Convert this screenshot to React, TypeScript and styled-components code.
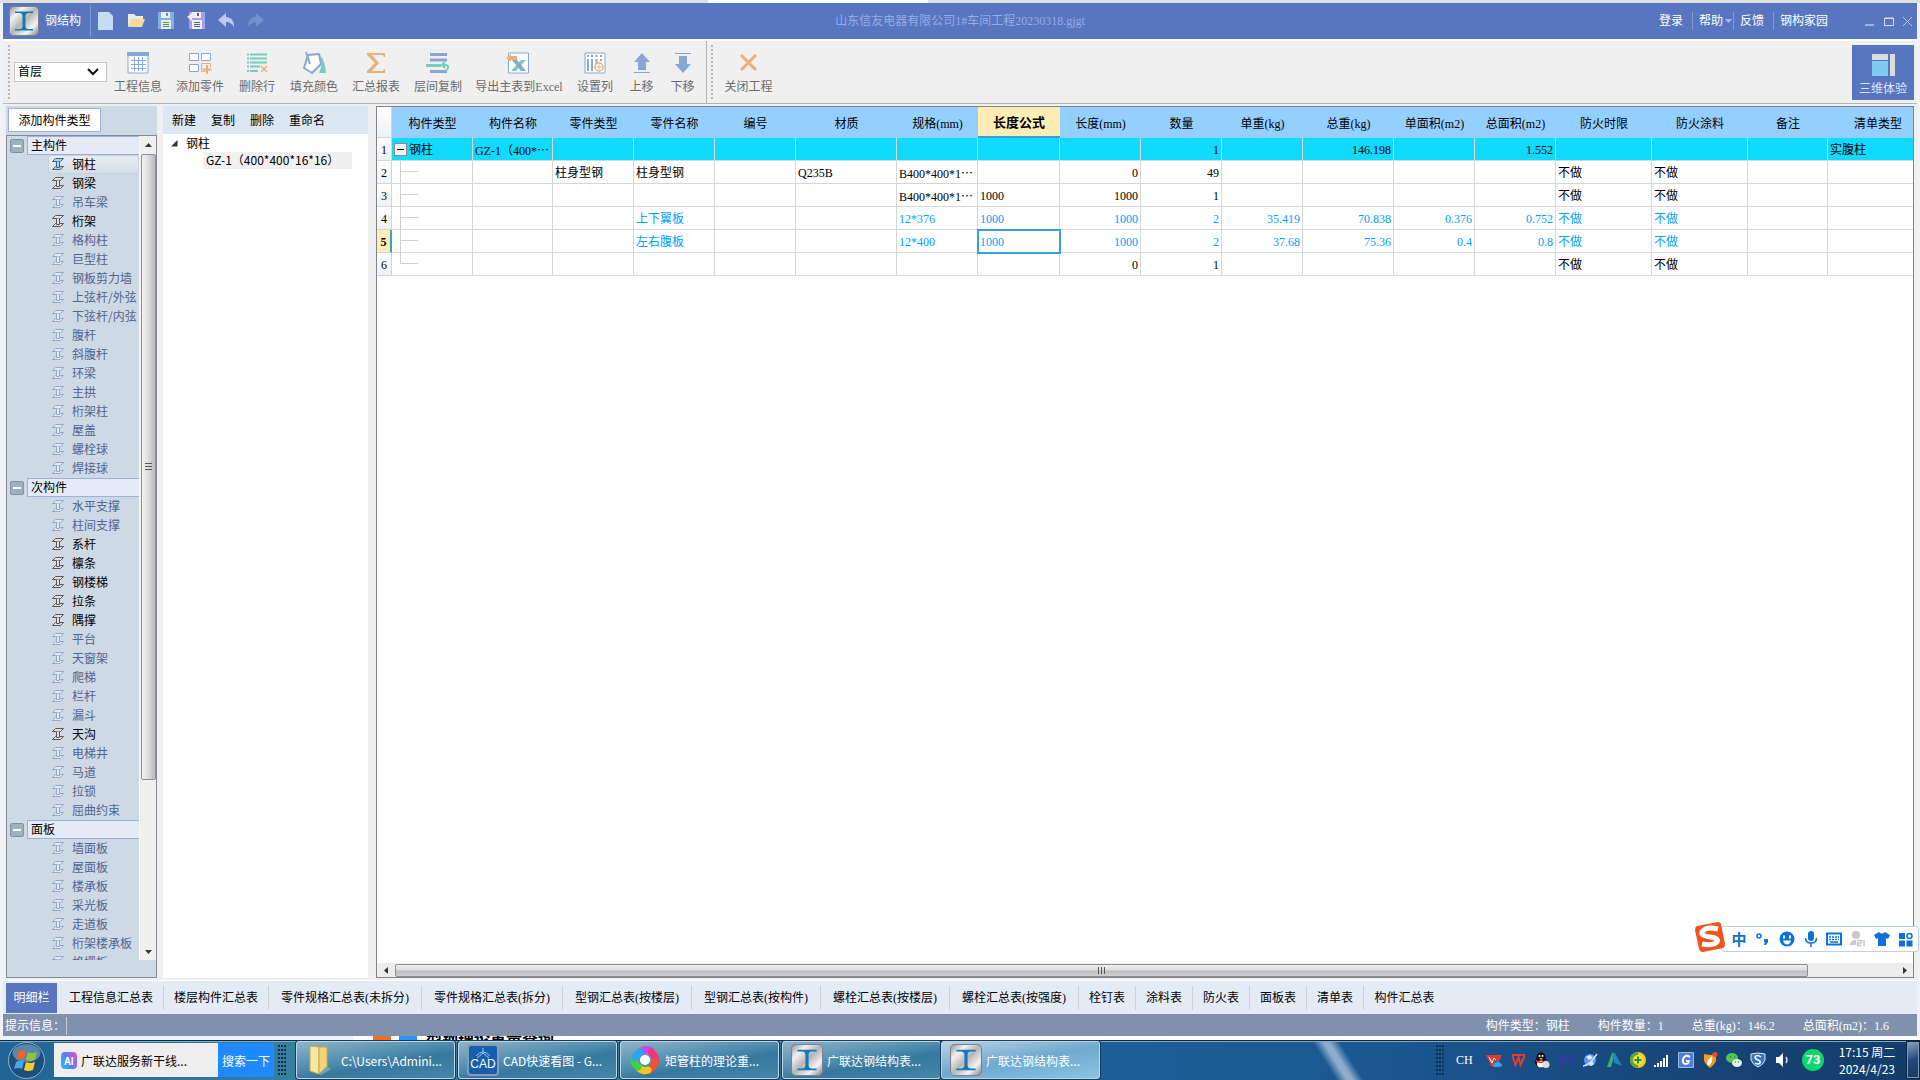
import React from "react";
import styled, { createGlobalStyle, css } from "styled-components";

const song = `"Liberation Serif", "Noto Sans CJK SC", serif`;
const hei = `"Noto Sans CJK SC", sans-serif`;

const GlobalStyle = createGlobalStyle`
  * { box-sizing: border-box; }
  body { margin: 0; background: #f0f0f0; }
  button, input, select { font: inherit; color: inherit; margin: 0; padding: 0; border: 0; background: none; border-radius: 0; }
  svg { display: block; flex: none; }
`;

/* ---------- frame ---------- */
const Screen = styled.div`
  height: 100vh;
  display: flex;
  flex-direction: column;
  overflow: hidden;
  font: 12px/18px ${song};
  color: #000;
  background: #eef3fa;
`;
const BackStrip = styled.div`
  height: 3px;
  flex: none;
  background: linear-gradient(90deg, #e0e0e0 708px, #fff 708px, #fff 928px, #e0e0e0 928px);
`;
const AppWindow = styled.div`
  flex: 1;
  min-height: 0;
  margin: 0 3px;
  display: flex;
  flex-direction: column;
  background: #f0f0f0;
`;

/* ---------- title bar ---------- */
const TitleBar = styled.header`
  height: 36px;
  flex: none;
  display: grid;
  grid-template-columns: 1fr auto 1fr;
  align-items: center;
  background: #5876c0;
  color: #fff;
`;
const TitleLeft = styled.div`
  display: flex;
  align-items: center;
  padding-left: 6px;
`;
const AppName = styled.span`
  margin: 0 9px 0 6px;
`;
const TitleRule = styled.i`
  width: 1px;
  height: ${(p: { $h: number }) => p.$h}px;
  background: #7f9bd2;
`;
const QuickTools = styled.div`
  display: flex;
  gap: 12px;
  margin-left: 6px;
`;
const QuickButton = styled.button`
  width: 18px;
  height: 20px;
  display: grid;
  place-items: center;
`;
const DocTitle = styled.span`
  color: #96ace6;
`;
const TitleRight = styled.div`
  display: flex;
  align-items: center;
  justify-content: flex-end;
  padding-right: 2px;
`;
const MenuButton = styled.button`
  display: flex;
  align-items: center;
  gap: 2px;
  padding: 0 ${(p: { $tight?: boolean }) => (p.$tight ? 1 : 9)}px 0 6px;
  height: 24px;
`;
const WindowButtons = styled.div`
  display: flex;
  gap: 4px;
  margin-left: 25px;
`;
const WindowButton = styled.button`
  width: 15px;
  height: 16px;
  display: grid;
  place-items: center;
`;

/* ---------- tool bar ---------- */
const ToolBar = styled.div`
  height: 65px;
  flex: none;
  display: flex;
  align-items: stretch;
  padding: 0 3px 0 5px;
  border-top: 2px solid #fff;
  border-bottom: 1px solid #b4b4b4;
  color: #6b6b6b;
`;
const Grip = styled.i`
  width: 2px;
  margin: 4px 0;
  background: repeating-linear-gradient(#b8b8b8 0 2px, transparent 2px 4px);
`;
const FloorBox = styled.label`
  align-self: center;
  position: relative;
  margin: 0 0 0 4px;
  svg { position: absolute; right: 8px; top: 6px; pointer-events: none; }
`;
const FloorSelect = styled.select`
  appearance: none;
  width: 93px;
  height: 20px;
  padding-left: 3px;
  border: 1px solid #c3c3c3;
  background: #fff;
  color: #000;
  display: block;
`;
const ToolButton = styled.button`
  width: ${(p: { $w: number }) => p.$w}px;
  padding: 11px 0 0;
  display: flex;
  flex-direction: column;
  align-items: center;
  gap: 4px;
  white-space: nowrap;
`;
const ToolRule = styled.i`
  width: 1px;
  margin: 0 4px 0 3px;
  background: #b4b4b4;
`;
const ThreeDButton = styled.button`
  margin: 4px 0 3px auto;
  width: 62px;
  padding-top: 7px;
  display: flex;
  flex-direction: column;
  align-items: center;
  gap: 3px;
  background: #5876c0;
  color: #dfe6f5;
`;

/* ---------- body ---------- */
const Body = styled.main`
  flex: 1;
  min-height: 0;
  display: flex;
  padding: 2px 3px;
`;
const TypePanel = styled.aside`
  width: 151px;
  display: flex;
  flex-direction: column;
  background: #cdd9e5;
  font-family: ${hei};
`;
const AddTypeButton = styled.button`
  width: 93px;
  height: 24px;
  flex: none;
  margin: 2px 0 3px 2px;
  border: 1px solid #9fb2dc;
  background: #fff;
  line-height: 22px;
`;
const TreeBox = styled.div`
  flex: 1;
  min-height: 0;
  display: flex;
  border: 1px solid #838a94;
  padding-bottom: 17px;
`;
const TreeList = styled.div`
  flex: 1;
  overflow: hidden;
  white-space: nowrap;
`;
const GroupRow = styled.div`
  height: 19px;
  display: flex;
  align-items: center;
  gap: 3px;
  padding-left: 3px;
`;
const GroupToggle = styled.button`
  width: 14px;
  height: 14px;
  border: 1px solid #7d95a3;
  border-radius: 2px;
  background: #9db1be;
  display: grid;
  place-items: center;
`;
const GroupName = styled.span`
  flex: 1;
  height: 19px;
  padding-left: 3px;
  line-height: 16px;
  border: 1px solid #9db0db;
  border-right: 0;
  background: #e4ebf6;
`;
type Tone = "on" | "off" | "sel";
const TypeItem = styled.button`
  width: calc(100% - 41px);
  height: 19px;
  margin-left: 41px;
  padding: 0 0 2px 4px;
  display: flex;
  align-items: center;
  gap: 8px;
  overflow: hidden;
  line-height: 17px;
  color: ${(p: { $tone: Tone }) => (p.$tone === "off" ? "#53648f" : "#000")};
  ${(p) =>
    p.$tone === "sel" &&
    css`
      background: linear-gradient(#e8edf3, #d6dce6);
      box-shadow: inset 0 0 0 1px #c8d0da;
      border-radius: 3px;
    `}
`;
const VScroll = styled.div`
  width: 17px;
  display: flex;
  flex-direction: column;
  align-items: center;
  background: #f0f0f0;
  border-left: 1px solid #f8f8f8;
`;
const VThumb = styled.div`
  width: 15px;
  flex: 0 0 76%;
  border: 1px solid #8d8f93;
  border-radius: 2px;
  background: linear-gradient(90deg, #f3f3f3, #dedee0 45%, #b9babd);
  display: grid;
  place-items: center;
`;
const ScrollButton = styled.button`
  width: 16px;
  height: 18px;
  display: grid;
  place-items: center;
`;
const Spacer = styled.i`
  flex: 1;
`;

const MemberPanel = styled.section`
  width: 205px;
  margin: 0 8px 0 6px;
  background: #fff;
  font-family: ${hei};
`;
const MemberTools = styled.div`
  height: 28px;
  display: flex;
  gap: 15px;
  padding-left: 9px;
  background: #dbe7f3;
`;
const PlainButton = styled.button`
  line-height: 28px;
`;
const MemberRoot = styled.div`
  display: flex;
  align-items: center;
  gap: 8px;
  height: 18px;
  padding-left: 8px;
`;
const MemberLeaf = styled.div`
  height: 17px;
  line-height: 16px;
  margin: 0 16px 0 40px;
  padding-left: 3px;
  background: #f0f0f0;
  white-space: nowrap;
`;

/* ---------- grid ---------- */
const GridPanel = styled.section`
  flex: 1;
  min-width: 0;
  display: flex;
  flex-direction: column;
  border: 1px solid #7f858f;
  background: #fff;
`;
const GridArea = styled.div`
  flex: 1;
  min-height: 0;
  overflow: hidden;
`;
const Table = styled.table`
  width: 1551px;
  table-layout: fixed;
  border-collapse: separate;
  border-spacing: 0;
`;
const HeadCell = styled.th`
  height: 31px;
  padding: 2px 0 0;
  font-size: ${(p: { $active?: boolean }) => (p.$active ? 13 : 12)}px;
  font-weight: ${(p) => (p.$active ? 700 : 400)};
  background: ${(p) => (p.$active ? "#ffedb5" : "#94d0ff")};
  border-bottom: ${(p) => (p.$active ? "2px solid #35a1d4" : "0")};
`;
const RowHead = styled.th`
  height: 23px;
  padding: 2px 0 0;
  line-height: 16px;
  color: #000;
  font-weight: ${(p: { $active?: boolean }) => (p.$active ? 700 : 400)};
  background: ${(p) => (p.$active ? "#ffedb5" : "linear-gradient(#fff, #eff1f4)")};
  border-bottom: 1px solid #d4d4d4;
  border-right: ${(p) => (p.$active ? "2px solid #35a1d4" : "1px solid #d4d4d4")};
`;
const Cell = styled.td`
  height: 23px;
  padding: ${(p: { $tree?: boolean }) => (p.$tree ? "0" : "2px 2px 0")};
  line-height: 16px;
  white-space: nowrap;
  overflow: hidden;
  border-right: 1px solid #d6d6d6;
  border-bottom: 1px solid #d6d6d6;
  text-align: ${(p: { $num?: boolean }) => (p.$num ? "right" : "left")};
  ${(p: { $active?: boolean }) => p.$active && "outline: 2px solid #35a1d4; outline-offset: -1px;"}
`;
const BodyRow = styled.tr`
  color: ${(p: { $blue?: boolean }) => (p.$blue ? "#00a2f8" : "#000")};
  background: ${(p: { $fill?: boolean }) => (p.$fill ? "#10dafe" : "#fff")};
`;
const Dots = styled.span`
  font-family: "Noto Sans CJK SC", sans-serif;
`;
const RootCell = styled.div`
  display: flex;
  align-items: center;
  gap: 2px;
  padding: 1px 0 0 2px;
`;
const CellToggle = styled.button`
  width: 13px;
  height: 13px;
  border: 1px solid #8d8d8d;
  background: #f2f2f4;
  display: grid;
  place-items: center;
`;
const HScroll = styled.div`
  height: 14px;
  flex: none;
  display: flex;
  align-items: center;
  background: #ededed;
`;
const HThumb = styled.div`
  flex: 0 0 92%;
  height: 13px;
  border: 1px solid #8d8f93;
  border-radius: 2px;
  background: linear-gradient(#f0f0f0, #dcdcde 45%, #bfc0c3 55%, #cfcfd1);
  display: grid;
  place-items: center;
`;
const HButton = styled.button`
  width: 18px;
  height: 14px;
  display: grid;
  place-items: center;
`;

/* ---------- bottom tabs and status ---------- */
const SheetTabs = styled.nav`
  height: 34px;
  flex: none;
  display: flex;
  align-items: center;
  padding-left: 3px;
  border-top: 1px solid #fff;
  background: #e4ebf5;
`;
const SheetTab = styled.button`
  width: ${(p: { $w: number }) => p.$w}px;
  height: 24px;
  white-space: nowrap;
  border-right: 1px solid #cfd0d2;
  &:last-child { border-right: 0; }
`;
const ActiveTab = styled.button`
  width: 51px;
  height: 30px;
  margin-right: 2px;
  background: #5876c0;
  color: #fff;
`;
const StatusBar = styled.footer`
  height: 22px;
  flex: none;
  display: flex;
  align-items: center;
  padding: 1px 28px 0 2px;
  background: #8091ad;
  color: #fff;
`;
const StatusRule = styled.i`
  width: 1px;
  height: 18px;
  margin-left: 1px;
  background: #c5ccd8;
`;
const StatusItems = styled.div`
  margin-left: auto;
  display: flex;
  gap: 28px;
`;

/* ---------- desktop behind and taskbar ---------- */
const Peek = styled.div`
  height: 4px;
  flex: none;
  display: flex;
  gap: 8px;
  padding-left: 373px;
  overflow: hidden;
  background: linear-gradient(90deg, #edf3fb 353px, #fff 353px);
`;
const PeekChip = styled.i`
  width: 18px;
  background: ${(p: { $c: string }) => p.$c};
`;
const PeekText = styled.span`
  padding-left: 1px;
  font: 700 16px/4px ${hei};
  white-space: nowrap;
`;
const TaskBar = styled.div`
  height: 40px;
  flex: none;
  display: flex;
  align-items: center;
  padding: 0 0 1px 8px;
  border-top: 1px solid #0d2940;
  box-shadow: inset 0 1px 0 #7fa9c4;
  font-family: ${hei};
  line-height: 17px;
  color: #fff;
  background:
    linear-gradient(58deg, transparent 40%, #8fadcb 48%, #8fadcb 52%, transparent 60%) 1283px 0 / 110px 40px no-repeat,
    linear-gradient(90deg, #1f6494, #35809f 15%, #2c759f 40%, #1c5f98 58%, #1b5790 72%, #174578 88%, #133c69);
`;
const Orb = styled.button`
  width: 37px;
  height: 37px;
`;
const SearchBox = styled.form`
  display: flex;
  height: 34px;
  margin-left: 9px;
`;
const SearchField = styled.label`
  width: 164px;
  display: flex;
  align-items: center;
  gap: 4px;
  padding-left: 7px;
  background: #eee;
`;
const AiMark = styled.i`
  width: 16px;
  height: 17px;
  border-radius: 4px;
  font: 700 10px/17px ${hei};
  text-align: center;
  background: linear-gradient(60deg, #19c8f5, #5b7cf8 50%, #f34fc0);
`;
const SearchInput = styled.input`
  width: 130px;
  color: #000;
  outline: 0;
`;
const SearchButton = styled.button`
  width: 56px;
  background: #1f8aff;
`;
const TaskGrip = styled.i`
  width: 8px;
  height: 30px;
  margin: ${(p: { $m: string }) => p.$m};
  background: radial-gradient(circle at 1px 1px, #0c2f4a 1px, transparent 1px) 0 0 / 3px 4px;
`;
const TaskList = styled.div`
  display: flex;
  gap: 3px;
`;
const TaskGroup = styled.div`
  display: flex;
`;
const TaskButton = styled.button`
  width: 159px;
  height: 38px;
  padding-left: 8px;
  display: flex;
  align-items: center;
  gap: 4px;
  text-align: left;
  white-space: nowrap;
  border: 1px solid #c1d6e2;
  border-radius: 3px;
  box-shadow: 0 0 0 1px #123c59;
  background: ${(p: { $active?: boolean }) =>
    p.$active
      ? "linear-gradient(170deg, #b9d2e3, #6fa9cf 50%, #8cc3e3)"
      : "linear-gradient(170deg, #8fb5c8, #4d8bae 45%, #37789f 60%, #4487a9)"};
`;
const Tray = styled.div`
  margin-left: auto;
  display: flex;
  align-items: center;
`;
const Lang = styled.span`
  width: 24px;
  margin-right: 2px;
  font-family: ${song};
`;
const TrayIcon = styled.button`
  width: 24px;
  height: 24px;
  display: grid;
  place-items: center;
`;
const Score = styled.span`
  width: 22px;
  height: 22px;
  margin: 0 13px 0 8px;
  border-radius: 50%;
  background: #0bd76b;
  font: 700 13px/22px Roboto, sans-serif;
  text-align: center;
`;
const Clock = styled.time`
  width: 60px;
  text-align: center;
  white-space: nowrap;
`;
const ShowDesktop = styled.button`
  width: 14px;
  height: 38px;
  margin-left: 9px;
  border: 1px solid #0b2744;
  box-shadow: inset 0 0 0 1px #7c97b3;
  background: linear-gradient(160deg, #8ba5be, #23497a 50%, #173a62);
`;

/* ---------- floating input method bar ---------- */
const ImeBar = styled.div`
  position: fixed;
  right: 1px;
  bottom: 128px;
  width: 198px;
  height: 26px;
  padding: 0 0 0 5px;
  display: flex;
  align-items: center;
  background: #fff;
  border: 1px solid #bcd2ea;
  border-radius: 3px;
  color: #0c72d8;
`;
const ImeLogo = styled.span`
  position: absolute;
  left: -29px;
  top: -6px;
`;
const ImeButton = styled.button`
  flex: 1;
  height: 24px;
  display: grid;
  place-items: center;
  font: 700 15px/20px ${hei};
`;

/* ---------- drawings ---------- */
const BeamLogo = ({ size, id }: { size: number; id: string }) => (
  <svg width={size} height={size} viewBox="0 0 30 30">
    <defs>
      <linearGradient id={id} x1="0" y1="0" x2="1" y2="1">
        <stop offset="0" stopColor="#8f8f8f" />
        <stop offset=".25" stopColor="#f2f2f2" />
        <stop offset=".5" stopColor="#b5b5b5" />
        <stop offset=".75" stopColor="#f4f4f4" />
        <stop offset="1" stopColor="#7d7d7d" />
      </linearGradient>
    </defs>
    <rect x=".5" y=".5" width="29" height="29" rx="4" fill={`url(#${id})`} stroke="#7d8088" />
    <path d="M6 5.500H24V7H19Q16.500 7.500 16.500 9.500V20.500Q16.500 22.500 19 23H24V24.500H6V23H11Q13.500 22.500 13.500 20.500V9.500Q13.500 7.500 11 7H6Z" fill="#1479b8" />
  </svg>
);

const beamTone = {
  on: { s: "#5b5654", f: "#e6dfdb" },
  off: { s: "#97a5c9", f: "#dcebf8" },
  sel: { s: "#43627f", f: "#a5d4ee" },
};
const BeamIcon = ({ tone }: { tone: Tone }) => (
  <svg width="12" height="12" viewBox="0 0 12 12" fill={beamTone[tone].f} stroke={beamTone[tone].s}>
    <path d="M3.500.5H11.500L8.500 3.500H.5ZM3.500 8.500H11.500L8.500 11.500H.5Z" />
    <path d="M4.500 3.500V9.500H7.500V3.500" />
  </svg>
);

const Arrow = ({ d }: { d: string }) => (
  <svg width="7" height="7" viewBox="0 0 7 7" fill="#333">
    <path d={d} />
  </svg>
);

const B = "#87a8d6";
const G = "#75cdbb";
const O = "#eab077";
const toolIcons: Record<string, React.ReactNode> = {
  info: (
    <>
      <path d="M1 1h20v20H1z" fill="#fff" stroke={B} />
      <path d="M0 0h22v4H0z" fill={B} />
      <path d="M4 8.500h15M4 12.500h15M4 16.500h15M7.500 5v14M11.500 5v14M15.500 5v14" stroke={B} fill="none" />
    </>
  ),
  add: (
    <>
      <path d="M.5 1.500h9v7h-9zM12.500 1.500h9v7h-9zM.5 12.500h9v7h-9z" fill="#fff" stroke={B} />
      <path d="M21.500 15v-3.500h-9v8h4" fill="none" stroke={O} />
      <path d="M18 13v9M13.500 17.500h9" stroke={O} strokeWidth="2" fill="none" />
    </>
  ),
  del: (
    <>
      <path d="M1 2.500h2M1 6.500h2M1 10.500h2M1 14.500h2M1 19h2M4 2.500h17M4 6.500h17M4 10.500h17M4 14.500h10M4 19h8" stroke={G} strokeWidth="2" />
      <path d="M15 14l6 6M21 14l-6 6" stroke={O} strokeWidth="1.500" />
    </>
  ),
  fill: (
    <>
      <path d="M5 3l11-1 2 10-9 9L1 16z" fill="#fff" stroke={B} strokeWidth="2" strokeLinejoin="round" />
      <path d="M3 0l4 12" stroke={B} strokeWidth="2" />
      <path d="M17 3q5 5 6 18h-7q4-8 1-18z" fill={G} />
    </>
  ),
  sum: <path d="M2 1h18v4h-1l-1-2H7l7 8-7 8h11l1-2h1v4H2v-2l8-8-8-8z" fill={O} />,
  copy: (
    <>
      <path d="M3 1h17v3H3zM3 6.500h17v3H3zM3 18h17v3H3z" fill={B} />
      <path d="M-1 12h15v3H-1z" fill={G} />
      <path d="M16 13h3q3 1 2 3l-2 3M18 10l-3 3 3 3" fill="none" stroke={G} strokeWidth="2" />
    </>
  ),
  excel: (
    <>
      <path d="M.5 1h20v20h-20z" fill="#fff" stroke={B} />
      <path d="M3 19h5L18 8h-5z" fill={G} />
      <path d="M4 8h5l9 11h-5z" fill={B} />
      <path d="M-2 6l5-4v2h6v4H3v2z" fill={O} />
    </>
  ),
  cols: (
    <>
      <path d="M1 1h20v20H1z" fill="#fff" stroke={B} />
      <path d="M4 3v2M8 3v2M12.500 3v2M17 3v2M4 7v12M8 7v12M12.500 7v5M17 7v2" stroke={B} strokeWidth="2" />
      <circle cx="15" cy="15" r="4" fill="#fff" stroke={O} strokeWidth="1.500" />
      <path d="M15 12.500v5M12.500 15h5M15 9.500v1M15 19.500v1M9.500 15h1M19.500 15h1" stroke={O} />
    </>
  ),
  up: <path d="M11 1l8 9h-4v8H7v-8H3zM3 20h16v1H3z" fill={B} />,
  down: <path d="M11 21l8-9h-4V4H7v8H3zM3 1h16v1H3z" fill={B} />,
  close: <path d="M3 3l15 15M18 3L3 18" stroke={O} strokeWidth="3" />,
};
const ToolIcon = ({ name }: { name: string }) => (
  <svg width="22" height="22" viewBox="0 0 22 22" fill="none" overflow="visible">
    {toolIcons[name]}
  </svg>
);

const quickIcons: [string, React.ReactNode][] = [
  ["新建文件", <path d="M1 1h11l4 4v14H1z" fill="#c5dcf3" key="a" />],
  [
    "打开",
    <g key="b">
      <path d="M1 15V3h6l2 2h7v6z" fill="#e6efdf" />
      <path d="M1 16l3-8h14l-3 8z" fill="#f4d9a0" />
    </g>,
  ],
  [
    "保存",
    <g key="c">
      <path d="M1 1h16v17H1z" fill="#7fb2e2" />
      <path d="M4 1h9v6H4zM4 9h10v9H4z" fill="#e6efdf" />
      <path d="M9 2h2v3H9zM6 11h6v1H6zM6 13h6v1H6zM6 15h6v1H6z" fill="#5e8f8f" />
    </g>,
  ],
  [
    "另存为",
    <g key="d">
      <path d="M2 1h16v17H2z" fill="#a99fe8" />
      <path d="M5 1h9v6H5zM5 9h10v9H5z" fill="#f0efe6" />
      <path d="M10 2h2v3h-2zM7 11h6v1H7zM7 13h6v1H7zM7 15h6v1H7z" fill="#5d5a95" />
      <path d="M0 6l5-4v2h3v3H5v3z" fill="#e6efdf" />
    </g>,
  ],
  ["撤销", <path key="e" d="M1 9l8-7v4q8 0 8 10-3-5-8-5v5z" fill="#bccbec" />],
  ["重做", <path key="f" d="M17 9L9 2v4Q1 6 1 16q3-5 8-5v5z" fill="#7590cf" />],
];

/* ---------- data ---------- */
const tools: [string, string, number][] = [
  ["info", "工程信息", 62],
  ["add", "添加零件", 62],
  ["del", "删除行", 52],
  ["fill", "填充颜色", 62],
  ["sum", "汇总报表", 62],
  ["copy", "层间复制", 62],
  ["excel", "导出主表到Excel", 100],
  ["cols", "设置列", 52],
  ["up", "上移", 41],
  ["down", "下移", 41],
];

const groups: { name: string; items: string[] }[] = [
  {
    name: "主构件",
    items: ["*钢柱", "+钢梁", "吊车梁", "+桁架", "格构柱", "巨型柱", "钢板剪力墙", "上弦杆/外弦", "下弦杆/内弦", "腹杆", "斜腹杆", "环梁", "主拱", "桁架柱", "屋盖", "螺栓球", "焊接球"],
  },
  {
    name: "次构件",
    items: ["水平支撑", "柱间支撑", "+系杆", "+檩条", "+钢楼梯", "+拉条", "+隅撑", "平台", "天窗架", "爬梯", "栏杆", "漏斗", "+天沟", "电梯井", "马道", "拉锁", "屈曲约束"],
  },
  { name: "面板", items: ["墙面板", "屋面板", "楼承板", "采光板", "走道板", "桁架楼承板", "格栅板"] },
];

const columns: [string, number, boolean?][] = [
  ["构件类型", 81],
  ["构件名称", 80],
  ["零件类型", 81],
  ["零件名称", 81],
  ["编号", 81],
  ["材质", 101],
  ["规格(mm)", 81],
  ["长度公式", 82],
  ["长度(mm)", 81, true],
  ["数量", 81, true],
  ["单重(kg)", 81, true],
  ["总重(kg)", 91, true],
  ["单面积(m2)", 81, true],
  ["总面积(m2)", 81, true],
  ["防火时限", 96],
  ["防火涂料", 96],
  ["备注", 80],
  ["清单类型", 100],
];

const rows: string[][] = [
  ["钢柱", "GZ-1（400*…", "", "", "", "", "", "", "", "1", "", "146.198", "", "1.552", "", "", "", "实腹柱"],
  ["", "", "柱身型钢", "柱身型钢", "", "Q235B", "B400*400*1…", "", "0", "49", "", "", "", "", "不做", "不做", "", ""],
  ["", "", "", "", "", "", "B400*400*1…", "1000", "1000", "1", "", "", "", "", "不做", "不做", "", ""],
  ["", "", "", "上下翼板", "", "", "12*376", "1000", "1000", "2", "35.419", "70.838", "0.376", "0.752", "不做", "不做", "", ""],
  ["", "", "", "左右腹板", "", "", "12*400", "1000", "1000", "2", "37.68", "75.36", "0.4", "0.8", "不做", "不做", "", ""],
  ["", "", "", "", "", "", "", "", "0", "1", "", "", "", "", "不做", "不做", "", ""],
];

const sheets = [
  "工程信息汇总表",
  "楼层构件汇总表",
  "零件规格汇总表(未拆分)",
  "零件规格汇总表(拆分)",
  "型钢汇总表(按楼层)",
  "型钢汇总表(按构件)",
  "螺栓汇总表(按楼层)",
  "螺栓汇总表(按强度)",
  "栓钉表",
  "涂料表",
  "防火表",
  "面板表",
  "清单表",
  "构件汇总表",
];
/* a wide character takes 12px, a bracket 6px, and each tab adds 21px */
const sheetWidth = (name: string) =>
  [...name].reduce((sum, ch) => sum + (ch === "(" || ch === ")" ? 6 : 12), 21);

const CellText = ({ text }: { text: string }) =>
  text.endsWith("…") ? (
    <>
      {text.slice(0, -1)}
      <Dots>⋯</Dots>
    </>
  ) : (
    <>{text}</>
  );

/* ---------- tray drawings ---------- */
const trayIcons: [string, React.ReactNode][] = [
  [
    "WPS云",
    <g key="1">
      <path d="M0 3h16l-3 6H9L7 14H5z" fill="#e23a2e" />
      <path d="M3 5l3 6 2-5 2 2" stroke="#fff" fill="none" />
      <path d="M7 15q0-4 3-5 3-2 4 1 2 0 2 2t-2 2z" fill="#3f9bf0" />
    </g>,
  ],
  ["WPS", <path key="2" d="M2 3h13M2.500 4l3 9 3-8 2 8 4-9" stroke="#e33d31" strokeWidth="2" fill="none" />],
  [
    "QQ",
    <g key="3">
      <ellipse cx="7" cy="10" rx="6" ry="6" fill="#111" />
      <circle cx="7" cy="5" r="4.500" fill="#111" />
      <circle cx="5.500" cy="4" r="1" fill="#fff" />
      <circle cx="8.500" cy="4" r="1" fill="#fff" />
      <path d="M5 6h4l-2 2z" fill="#f5a21b" />
      <ellipse cx="7" cy="12" rx="4" ry="3.500" fill="#fff" />
      <path d="M2 8q5 3 10 0v2q-5 2-10 0z" fill="#e32b2b" />
      <circle cx="12" cy="12.500" r="3.500" fill="#ddd" />
    </g>,
  ],
  ["同步", <path key="4" d="M2 5h7M11 5q4 1 4 6h-3M9 12H4q-3-2-1-6" stroke="#3c35a5" strokeWidth="2" fill="none" />],
  [
    "浏览器",
    <g key="5">
      <circle cx="8" cy="8" r="6" fill="#5e9ce8" />
      <path d="M4 5l4-2 3 3-4 2zM6 11l4-2 2 3-3 2z" fill="#dcecfb" />
      <path d="M1 14q6 0 14-12" stroke="#cfe0f7" strokeWidth="1.500" fill="none" />
    </g>,
  ],
  [
    "Autodesk",
    <g key="6">
      <path d="M1 15L6 1h3L5 15z" fill="#3fae6a" />
      <path d="M7 1h2l7 13-8-3z" fill="#1f86c6" />
    </g>,
  ],
  [
    "安全卫士",
    <g key="7">
      <circle cx="8" cy="8" r="8" fill="#f0cc1e" />
      <path d="M0 8a8 8 0 0 1 8-8v16a8 8 0 0 1-8-8z" fill="#56a83a" />
      <circle cx="8" cy="8" r="5" fill="#f6e045" />
      <path d="M8 4.500v7M4.500 8h7" stroke="#2f8f2f" strokeWidth="2" />
    </g>,
  ],
  ["网络", <path key="8" d="M1 13v2M4 11v4M7 9v6M10 6v9M13 3v12" stroke="#fff" strokeWidth="2" />],
  [
    "广联达",
    <g key="9">
      <path d="M.5.5h15v15H.5z" fill="#4f7fd6" stroke="#9db9ea" />
      <path d="M12 5q-5-3-7 2-1 5 3 5 2 0 3-3H8" stroke="#fff" strokeWidth="2" fill="none" />
    </g>,
  ],
  [
    "防火墙",
    <g key="10">
      <path d="M2 2l6 1 6-1v7q-2 4-6 7-4-3-6-7z" fill="#f39b23" />
      <path d="M5 12q0-4 5-8 1 6-3 10z" fill="#fff" />
      <circle cx="13" cy="2.500" r="2.500" fill="#f0472e" />
    </g>,
  ],
  [
    "微信",
    <g key="11">
      <ellipse cx="6" cy="6" rx="6" ry="5" fill="#4fc553" />
      <ellipse cx="11" cy="11" rx="5" ry="4" fill="#e6efe4" />
      <path d="M4 5h1M8 5h1M9 10h1M12 10h1" stroke="#244" />
    </g>,
  ],
  [
    "盾牌",
    <g key="12">
      <path d="M1 2l7-1 7 1v6q-2 5-7 7-5-2-7-7z" fill="#2f77ba" stroke="#e1e9f2" />
      <path d="M11 5q-4-3-6 0 0 2 3 3 3 1 2 3-2 2-5 0" stroke="#fff" strokeWidth="1.500" fill="none" />
    </g>,
  ],
  [
    "音量",
    <g key="13">
      <path d="M2 5h3l4-4v14l-4-4H2z" fill="#fff" />
      <path d="M12 5q2 3 0 6" stroke="#cdd8e4" fill="none" strokeWidth="1.500" />
    </g>,
  ],
];

const imeIcons: [string, React.ReactNode][] = [
  [
    "标点",
    <g key="1">
      <circle cx="4" cy="5" r="2" fill="none" stroke="currentColor" strokeWidth="1.500" />
      <path d="M9 8h4v3l-2 3H9l1-3H9z" />
    </g>,
  ],
  [
    "表情",
    <g key="2">
      <circle cx="8" cy="8" r="7.500" />
      <path d="M5 4.500v3M11 4.500v3" stroke="#fff" strokeWidth="2" />
      <path d="M4 9.500h8q-1 4-4 4t-4-4z" fill="#fff" />
    </g>,
  ],
  [
    "语音",
    <g key="3">
      <rect x="5" y="0" width="6" height="10" rx="3" />
      <path d="M2.500 7q0 5 5.500 5t5.500-5M8 12v4" stroke="currentColor" fill="none" strokeWidth="1.500" />
    </g>,
  ],
  [
    "软键盘",
    <g key="4">
      <path d="M1 2.500h14v11H1z" fill="none" stroke="currentColor" strokeWidth="2" />
      <path d="M3 6h10M3 8.500h10" stroke="currentColor" strokeWidth="1.500" strokeDasharray="2 1" />
      <path d="M4 11h8" stroke="currentColor" strokeWidth="1.500" />
    </g>,
  ],
  [
    "账号",
    <g key="5" fill="#c9c9c9">
      <circle cx="6" cy="4" r="4" />
      <path d="M0 14q0-5 6-5v5z" />
      <path d="M7 9.500h4.500v2.500H7.500v2.500h4M14 9v6" stroke="#c9c9c9" strokeWidth="1.500" fill="none" />
    </g>,
  ],
  ["皮肤", <path key="6" d="M5 1q3 3 6 0l5 3-2 4-2-1v8H4V7L2 8 0 4z" />],
  [
    "工具箱",
    <g key="7">
      <path d="M1 2h6v6H1zM1 9.500h6v6H1zM8.500 9.500h6v6h-6z" />
      <circle cx="11.500" cy="5" r="2.500" fill="none" stroke="currentColor" strokeWidth="1.500" />
    </g>,
  ],
];

/* ---------- sections ---------- */
const TopBar = () => (
  <TitleBar>
    <TitleLeft>
      <BeamLogo size={30} id="logo-main" />
      <AppName>钢结构</AppName>
      <TitleRule $h={32} />
      <QuickTools>
        {quickIcons.map(([label, art]) => (
          <QuickButton key={label} aria-label={label}>
            <svg width="18" height="20" viewBox="0 0 18 20">
              {art}
            </svg>
          </QuickButton>
        ))}
      </QuickTools>
    </TitleLeft>
    <DocTitle>山东信友电器有限公司1#车间工程20230318.gjgt</DocTitle>
    <TitleRight>
      <MenuButton>登录</MenuButton>
      <TitleRule $h={18} />
      <MenuButton $tight>
        帮助
        <svg width="7" height="4" viewBox="0 0 7 4" fill="#a9bae4">
          <path d="M0 0h7L3.500 4z" />
        </svg>
      </MenuButton>
      <TitleRule $h={18} />
      <MenuButton>反馈</MenuButton>
      <TitleRule $h={18} />
      <MenuButton>钢构家园</MenuButton>
      <WindowButtons>
        <WindowButton aria-label="最小化">
          <svg width="9" height="9" stroke="#b9c7ea" strokeWidth="1.500">
            <path d="M0 8h9" />
          </svg>
        </WindowButton>
        <WindowButton aria-label="最大化">
          <svg width="10" height="9" stroke="#d5def2" fill="none">
            <path d="M.5 1h9v7.500h-9zM0 1.500h10" />
          </svg>
        </WindowButton>
        <WindowButton aria-label="关闭">
          <svg width="9" height="9" stroke="#b9c7ea">
            <path d="M0 0l9 9M9 0L0 9" />
          </svg>
        </WindowButton>
      </WindowButtons>
    </TitleRight>
  </TitleBar>
);

const Tools = () => (
  <ToolBar>
    <Grip />
    <FloorBox>
      <FloorSelect defaultValue="首层" aria-label="楼层">
        <option>首层</option>
      </FloorSelect>
      <svg width="12" height="8" viewBox="0 0 12 8" fill="none" stroke="#111" strokeWidth="2">
        <path d="M1 1l5 5 5-5" />
      </svg>
    </FloorBox>
    {tools.map(([icon, label, w]) => (
      <ToolButton key={icon} $w={w}>
        <ToolIcon name={icon} />
        {label}
      </ToolButton>
    ))}
    <ToolRule />
    <Grip />
    <ToolButton $w={71}>
      <ToolIcon name="close" />
      关闭工程
    </ToolButton>
    <ThreeDButton>
      <svg width="23" height="25" viewBox="0 0 23 25">
        <path d="M0 2h16v6H0zM18 2h5v22h-5z" fill="#dcdcdc" />
        <path d="M0 9h16v15H0z" fill="#7ecbf3" />
      </svg>
      三维体验
    </ThreeDButton>
  </ToolBar>
);

const TypeTree = () => (
  <TypePanel>
    <AddTypeButton>添加构件类型</AddTypeButton>
    <TreeBox>
      <TreeList>
        {groups.map((g) => (
          <React.Fragment key={g.name}>
            <GroupRow>
              <GroupToggle aria-label={`收起${g.name}`}>
                <svg width="8" height="2">
                  <path d="M0 0h8v2H0z" fill="#fff" />
                </svg>
              </GroupToggle>
              <GroupName>{g.name}</GroupName>
            </GroupRow>
            {g.items.map((raw) => {
              const tone: Tone = raw[0] === "*" ? "sel" : raw[0] === "+" ? "on" : "off";
              return (
                <TypeItem key={raw} $tone={tone}>
                  <BeamIcon tone={tone} />
                  {raw.replace(/^[*+]/, "")}
                </TypeItem>
              );
            })}
          </React.Fragment>
        ))}
      </TreeList>
      <VScroll>
        <ScrollButton aria-label="向上滚动">
          <Arrow d="M0 5l3.500-4L7 5z" />
        </ScrollButton>
        <VThumb>
          <svg width="7" height="8" stroke="#555">
            <path d="M0 .5h7M0 3.500h7M0 6.500h7" />
          </svg>
        </VThumb>
        <Spacer />
        <ScrollButton aria-label="向下滚动">
          <Arrow d="M0 2l3.500 4L7 2z" />
        </ScrollButton>
      </VScroll>
    </TreeBox>
  </TypePanel>
);

const Members = () => (
  <MemberPanel>
    <MemberTools>
      {["新建", "复制", "删除", "重命名"].map((t) => (
        <PlainButton key={t}>{t}</PlainButton>
      ))}
    </MemberTools>
    <MemberRoot>
      <svg width="7" height="7" viewBox="0 0 7 7" fill="#333">
        <path d="M6.500 0v6.500H0z" />
      </svg>
      钢柱
    </MemberRoot>
    <MemberLeaf>GZ-1（400*400*16*16）</MemberLeaf>
  </MemberPanel>
);

const DetailGrid = () => (
  <GridPanel>
    <GridArea>
      <Table>
        <colgroup>
          <col width={15} />
          {columns.map(([name, w]) => (
            <col key={name} width={w} />
          ))}
        </colgroup>
        <thead>
          <tr>
            <RowHead as="td" />
            {columns.map(([name], i) => (
              <HeadCell key={name} $active={i === 7}>
                {name}
              </HeadCell>
            ))}
          </tr>
        </thead>
        <tbody>
          {rows.map((row, r) => (
            <BodyRow key={r} $fill={r === 0} $blue={r === 3 || r === 4}>
              <RowHead $active={r === 4}>{r + 1}</RowHead>
              {row.map((text, c) => (
                <Cell key={c} $tree={c === 0} $num={columns[c][2]} $active={r === 4 && c === 7}>
                  {c > 0 ? (
                    <CellText text={text} />
                  ) : r === 0 ? (
                    <RootCell>
                      <CellToggle aria-label="收起钢柱">
                        <svg width="7" height="1">
                          <path d="M0 0h7v1H0z" />
                        </svg>
                      </CellToggle>
                      {text}
                    </RootCell>
                  ) : (
                    <svg width="28" height="22" stroke="#d0d0d0" fill="none">
                      <path d={r === 5 ? "M8.500 0V10.500H26" : "M8.500 0V22M8.500 10.500H26"} />
                    </svg>
                  )}
                </Cell>
              ))}
            </BodyRow>
          ))}
        </tbody>
      </Table>
    </GridArea>
    <HScroll>
      <HButton aria-label="向左滚动">
        <Arrow d="M5 0v7L1 3.500z" />
      </HButton>
      <HThumb>
        <svg width="8" height="7" stroke="#555">
          <path d="M.5 0v7M3.500 0v7M6.500 0v7" />
        </svg>
      </HThumb>
      <Spacer />
      <HButton aria-label="向右滚动">
        <Arrow d="M2 0v7l4-3.500z" />
      </HButton>
    </HScroll>
  </GridPanel>
);

const Task = () => (
  <TaskBar>
    <Orb aria-label="开始">
      <svg width="37" height="37" viewBox="0 0 37 37">
        <circle cx="18.500" cy="18.500" r="18" fill="#1d4f7c" stroke="#8fb3cc" />
        <ellipse cx="18.500" cy="11" rx="14" ry="9" fill="#6f9fc1" opacity=".7" />
        <path d="M10 10q4-3 8-1l-2 8q-4-2-8 1z" fill="#f0632b" />
        <path d="M20 10q4 2 9 0l-2 8q-5 2-9 0z" fill="#8cc63f" />
        <path d="M8 20q4-3 8-1l-2 8q-4-2-8 0z" fill="#4ba6e6" />
        <path d="M18 20q4 2 9 0l-2 8q-5 2-9 0z" fill="#fdc82f" />
      </svg>
    </Orb>
    <SearchBox onSubmit={(e) => e.preventDefault()}>
      <SearchField>
        <AiMark>AI</AiMark>
        <SearchInput defaultValue="广联达服务新干线..." aria-label="搜索" />
      </SearchField>
      <SearchButton>搜索一下</SearchButton>
    </SearchBox>
    <TaskGrip $m="0 10px 0 4px" />
    <TaskList>
      <TaskButton>
        <svg width="32" height="32" viewBox="0 0 32 32">
          <path d="M5 2l9 1v27l-9-3z" fill="#f8e7a0" stroke="#c9a94f" />
          <path d="M14 3h8v21l-8 6z" fill="#efd47b" stroke="#c9a94f" />
          <path d="M22 22l4 3-10 6-2-1z" fill="#7e9fae" />
        </svg>
        C:\Users\Admini...
      </TaskButton>
      <TaskButton>
        <svg width="32" height="32" viewBox="0 0 32 32">
          <rect x="1" y="1" width="30" height="30" rx="3" fill="#135fae" stroke="#8a9cab" strokeWidth="2" />
          <path d="M16 4v4M9 12q7-8 14 0M10 14l6-5 6 5" stroke="#9cc8ef" fill="none" />
          <text x="16" y="24" fontSize="12" textAnchor="middle" fill="#fff" fontFamily="Liberation Sans, sans-serif">
            CAD
          </text>
        </svg>
        CAD快速看图 - G...
      </TaskButton>
      <TaskButton>
        <svg width="32" height="32" viewBox="0 0 32 32" fill="none" strokeWidth="7" strokeLinecap="round">
          <path d="M10 9q5-5 11-3" stroke="#c747ee" />
          <path d="M22 8q6 5 4 10" stroke="#f2357b" />
          <path d="M26 18q-1 6-6 8" stroke="#f5532b" />
          <path d="M19 26q-5 2-9-2" stroke="#f8c51f" />
          <path d="M9 23q-5-4-4-9" stroke="#43d138" />
          <path d="M6 14q1-4 5-6" stroke="#2ea4ef" />
          <circle cx="16" cy="16" r="5" fill="#fff" />
        </svg>
        矩管柱的理论重...
      </TaskButton>
      <TaskGroup>
        <TaskButton>
          <BeamLogo size={32} id="logo-task-a" />
          广联达钢结构表...
        </TaskButton>
        <TaskButton $active>
          <BeamLogo size={32} id="logo-task-b" />
          广联达钢结构表...
        </TaskButton>
      </TaskGroup>
    </TaskList>
    <Tray>
      <TaskGrip $m="0 12px 0 0" />
      <Lang>CH</Lang>
      {trayIcons.map(([label, art]) => (
        <TrayIcon key={label} aria-label={label}>
          <svg width="16" height="16" viewBox="0 0 16 16">
            {art}
          </svg>
        </TrayIcon>
      ))}
      <Score>73</Score>
      <Clock>
        17:15 周二
        <br />
        2024/4/23
      </Clock>
      <ShowDesktop aria-label="显示桌面" />
    </Tray>
  </TaskBar>
);

const Ime = () => (
  <ImeBar>
    <ImeLogo>
      <svg width="34" height="32" viewBox="0 0 34 32">
        <path d="M4 5L25 1q2 0 3 2l4 20q0 3-2 4L10 31q-3 0-4-3L2 9q0-3 2-4z" fill="#f1531f" />
        <path d="M25 8Q13 5 9 11q-1 4 8 5 9 1 7 5-4 4-15 2" fill="none" stroke="#fff" strokeWidth="5" />
      </svg>
    </ImeLogo>
    <ImeButton>中</ImeButton>
    {imeIcons.map(([label, art]) => (
      <ImeButton key={label} aria-label={label}>
        <svg width="16" height="16" viewBox="0 0 16 16" fill="currentColor">
          {art}
        </svg>
      </ImeButton>
    ))}
  </ImeBar>
);

export default function App() {
  return (
    <Screen lang="zh-CN">
      <GlobalStyle />
      <BackStrip />
      <AppWindow>
        <TopBar />
        <Tools />
        <Body>
          <TypeTree />
          <Members />
          <DetailGrid />
        </Body>
        <SheetTabs>
          <ActiveTab>明细栏</ActiveTab>
          {sheets.map((s) => (
            <SheetTab key={s} $w={sheetWidth(s)}>
              {s}
            </SheetTab>
          ))}
        </SheetTabs>
        <StatusBar>
          提示信息：
          <StatusRule />
          <StatusItems>
            <span>构件类型：钢柱</span>
            <span>构件数量：1</span>
            <span>总重(kg)：146.2</span>
            <span>总面积(m2)：1.6</span>
          </StatusItems>
        </StatusBar>
      </AppWindow>
      <Peek>
        <PeekChip $c="#ff6a1f" />
        <PeekChip $c="#2b94ff" />
        <PeekText>型钢理论重量查询</PeekText>
      </Peek>
      <Task />
      <Ime />
    </Screen>
  );
}
